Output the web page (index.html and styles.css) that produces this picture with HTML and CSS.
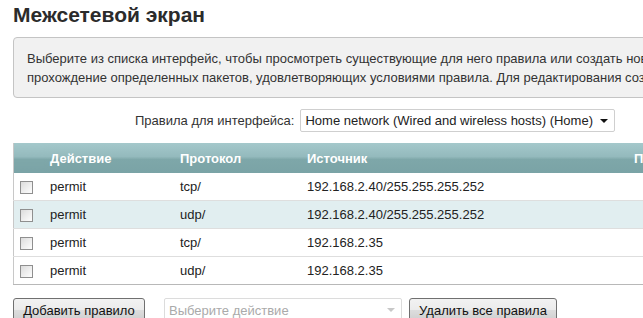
FILE: index.html
```html
<!DOCTYPE html>
<html lang="ru">
<head>
<meta charset="utf-8">
<link rel="stylesheet" href="styles.css">
</head>
<body>
<div class="page">
  <h1 class="title">Межсетевой экран</h1>
  <div class="info">
    <p>Выберите из списка интерфейс, чтобы просмотреть существующие для него правила или создать новое правило, разрешающее или запрещающее</p>
    <p>прохождение определенных пакетов, удовлетворяющих условиями правила. Для редактирования созданного правила щелкните по нему.</p>
  </div>
  <div class="iface">
    <span class="iface-label">Правила для интерфейса:</span>
    <div class="select">
      <span class="select-text">Home network (Wired and wireless hosts) (Home)</span>
      <span class="arrow"></span>
    </div>
  </div>
  <table class="rules">
    <thead>
      <tr>
        <th class="c0"></th>
        <th class="c1">Действие</th>
        <th class="c2">Протокол</th>
        <th class="c3">Источник</th>
        <th class="c4">Порт источника</th>
      </tr>
    </thead>
    <tbody>
      <tr><td class="c0"><span class="cb"></span></td><td>permit</td><td>tcp/</td><td>192.168.2.40/255.255.255.252</td><td></td></tr>
      <tr class="alt"><td class="c0"><span class="cb"></span></td><td>permit</td><td>udp/</td><td>192.168.2.40/255.255.255.252</td><td></td></tr>
      <tr><td class="c0"><span class="cb"></span></td><td>permit</td><td>tcp/</td><td>192.168.2.35</td><td></td></tr>
      <tr><td class="c0"><span class="cb"></span></td><td>permit</td><td>udp/</td><td>192.168.2.35</td><td></td></tr>
    </tbody>
  </table>
  <div class="actions">
    <button class="btn btn-add">Добавить правило</button>
    <div class="select select-disabled">
      <span class="select-text">Выберите действие</span>
      <span class="arrow arrow-grey"></span>
    </div>
    <button class="btn btn-del">Удалить все правила</button>
  </div>
</div>
</body>
</html>
```

FILE: styles.css
```css
html, body {
  margin: 0;
  padding: 0;
  background: #fff;
  overflow: hidden;
}
body {
  font-family: "Liberation Sans", Arial, sans-serif;
  color: #333;
  font-size: 13px;
}
.page {
  padding-left: 13px;
  width: 900px;
}
.title {
  margin: 0;
  padding-top: 3px;
  height: 34px;
  font-size: 21px;
  font-weight: bold;
  color: #2b2b2b;
  line-height: 24px;
}
.info {
  background: #f1f1f1;
  border: 1px solid #c4c4c4;
  border-radius: 4px;
  padding: 11px 13px 10px;
  height: 38px;
  width: 760px;
}
.info p {
  margin: 0;
  line-height: 19px;
  white-space: nowrap;
  color: #333;
}
.iface {
  display: flex;
  align-items: center;
  margin-top: 11px;
  padding-left: 122px;
  height: 23px;
}
.iface-label {
  margin-right: 6px;
  color: #333;
}
.select {
  display: flex;
  align-items: center;
  justify-content: space-between;
  box-sizing: border-box;
  width: 315px;
  height: 23px;
  border: 1px solid #cfcfcf;
  border-radius: 2px;
  padding: 0 6px 0 4px;
  background: #fff;
  color: #222;
  white-space: nowrap;
}
.arrow {
  width: 0;
  height: 0;
  border-left: 4px solid transparent;
  border-right: 4px solid transparent;
  border-top: 4px solid #111;
}
.arrow-grey {
  border-top-color: #c8c8c8;
}
.rules {
  margin-top: 11px;
  border-collapse: collapse;
  border-left: 1px solid #c8c8c8;
  border-bottom: 1px solid #b8b8b8;
  table-layout: fixed;
  width: 760px;
}
.rules th, .rules td {
  text-align: left;
  padding: 0 0 0 6px;
  white-space: nowrap;
}
.rules th {
  height: 30px;
  color: #fff;
  font-weight: bold;
  font-size: 13px;
  background: linear-gradient(to bottom, #a4c8cb 0%, #94babd 45%, #7ea7a9 55%, #7aa3a6 100%);
}
.c0 { width: 24px; }
.c1 { width: 124px; }
.c2 { width: 121px; }
.c3 { width: 321px; }
.rules td {
  height: 27px;
  border-top: 1px solid #dedede;
  color: #222;
}
.rules tbody tr:first-child td {
  border-top: none;
}
.rules tr.alt td {
  background: #e1eef0;
}
.cb {
  display: block;
  width: 11px;
  height: 11px;
  border: 1px solid #8f8f8f;
  background: linear-gradient(135deg, #dcdcdc 0%, #f4f4f4 70%, #fdfdfd 100%);
  margin-top: 1px;
}
.actions {
  display: flex;
  align-items: flex-start;
  margin-top: 13px;
}
.btn {
  font-family: "Liberation Sans", Arial, sans-serif;
  font-size: 13px;
  color: #111;
  height: 24px;
  border: 1px solid #707070;
  border-radius: 3px;
  background: linear-gradient(to bottom, #f2f2f2 0%, #ebebeb 50%, #dddddd 51%, #cfcfcf 100%);
  padding: 0;
  margin: 0;
  white-space: nowrap;
}
.btn-add {
  width: 132px;
}
.select-disabled {
  margin-left: 19px;
  width: 238px;
  height: 24px;
  border-color: #dcdcdc;
  color: #aaa;
  padding-right: 6px;
}
.btn-del {
  margin-left: 7px;
  width: 148px;
}
```
